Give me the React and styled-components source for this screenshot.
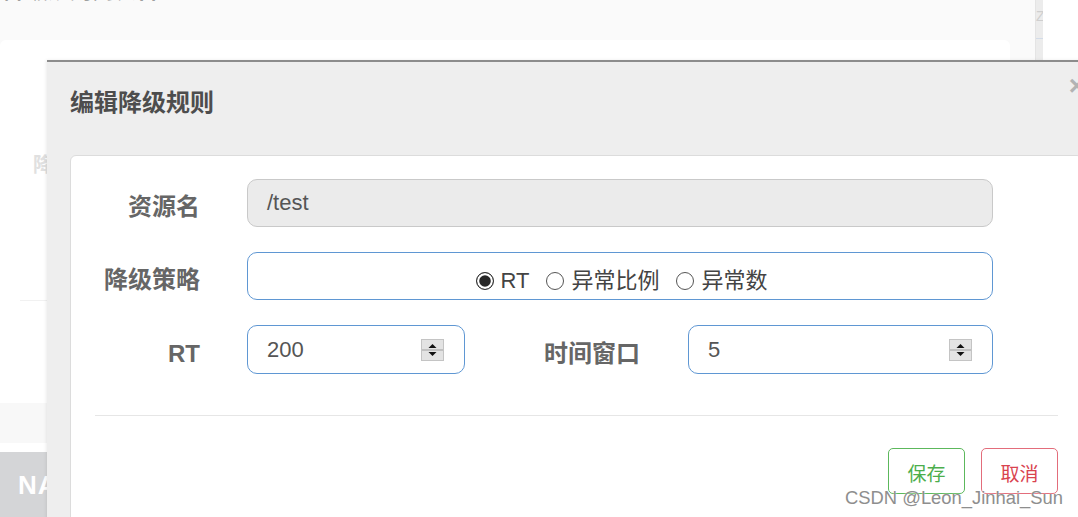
import React from "react";
import styled, { createGlobalStyle } from "styled-components";

const GlobalStyle = createGlobalStyle`
  html, body { margin: 0; padding: 0; background: #fff; overflow: hidden; }
  body { font-family: "Liberation Sans", "Noto Sans CJK SC", Arial, sans-serif; }
  * { box-sizing: border-box; }
`;

const Page = styled.div`
  position: relative;
  width: 1078px;
  height: 517px;
  overflow: hidden;
  display: flex;
  background: #fff;
`;

const MainArea = styled.div`
  width: 1035px;
  display: flex;
  flex-direction: column;
  background: #fafafa;
`;

const PageHeader = styled.div`
  height: 40px;
  overflow: hidden;
  padding-left: 4px;
`;

const PageTitle = styled.h2`
  margin: -21px 0 0;
  font-size: 22px;
  line-height: 24px;
  color: #8a8a8a;
  font-weight: 700;
`;

const Card = styled.section`
  height: 363px;
  margin-right: 25px;
  background: #fff;
  border-radius: 6px 6px 0 0;
  padding: 115px 0 0 33px;
`;

const CardLabel = styled.div`
  font-size: 20px;
  line-height: 20px;
  font-weight: 700;
  color: #e0e0e0;
`;

const CardRule = styled.div`
  margin: 125px 0 0 -13px;
  border-top: 1px solid #f1f1f1;
`;

const Strip = styled.div`
  height: 40px;
  background: #f8f8f8;
`;

const Gap = styled.div`
  height: 9px;
  background: #fff;
`;

const Footer = styled.footer`
  flex: 1;
  background: #d4d5d7;
  padding: 18px 0 0 18px;
  font-size: 26px;
  font-weight: 700;
  color: #fff;
  letter-spacing: 1px;
`;

const SideStrip = styled.div`
  width: 8px;
  height: 60px;
  background: #ececec;
  border-left: 1px solid #e4e4e4;
  overflow: hidden;
  font-size: 14px;
  color: #cfcfcf;
  padding-top: 8px;
`;

const SideLine = styled.div`
  margin-top: 14px;
  border-top: 1px solid #d3dce8;
`;

const Modal = styled.div`
  position: absolute;
  left: 47px;
  top: 60px;
  width: 1060px;
  height: 480px;
  background: #eeeeee;
  border-top: 2px solid #8c8c8c;
  box-shadow: -1px 0 3px rgba(0, 0, 0, 0.08);
`;

const ModalHeader = styled.header`
  display: flex;
  justify-content: space-between;
  align-items: flex-start;
  height: 93px;
  padding: 29px 22px 0 23px;
`;

const ModalTitle = styled.h3`
  margin: 0;
  font-size: 24px;
  line-height: 24px;
  font-weight: 700;
  color: #4d4d4d;
`;

const Close = styled.span`
  margin-top: -14px;
  font-size: 28px;
  line-height: 18px;
  font-weight: 700;
  color: #b3b3b3;
`;

const Panel = styled.div`
  margin-left: 23px;
  width: 1013px;
  background: #fff;
  border: 1px solid #dcdcdc;
  border-radius: 6px;
  padding: 23px 24px 30px;
`;

const Form = styled.div`
  display: grid;
  grid-template-columns: 105px 746px;
  column-gap: 47px;
  row-gap: 25px;
  align-items: center;
`;

const Label = styled.div`
  text-align: right;
  font-size: 24px;
  line-height: 24px;
  font-weight: 700;
  color: #666;
  padding-top: 8px;
  ${(p) => (p.$width ? `width: ${p.$width}px; flex: none;` : "")}
`;

const InputBox = styled.div`
  display: flex;
  align-items: center;
  height: ${(p) => p.$height || 48}px;
  ${(p) => (p.$width ? `width: ${p.$width}px; flex: none;` : "flex: 1;")}
  border-radius: 10px;
  padding-left: 19px;
  font-size: 22px;
  color: #555;
  background: ${(p) => (p.$disabled ? "#ebebeb" : "#fff")};
  border: ${(p) => (p.$disabled ? "1px solid #c9c9c9" : "1.5px solid #5f97d3")};
  justify-content: ${(p) => (p.$center ? "center" : "flex-start")};
  padding-top: ${(p) => (p.$center ? "10px" : "0")};
`;

const SplitRow = styled.div`
  display: flex;
  align-items: center;
`;

const LabelGap = styled.div`
  width: 48px;
  flex: none;
`;

const Spinner = styled.svg`
  margin-left: auto;
  margin-right: 20px;
  flex: none;
`;

const RadioGroup = styled.div`
  display: flex;
  align-items: center;
  gap: 17px;
  margin-left: -16px;
`;

const RadioItem = styled.label`
  display: flex;
  align-items: center;
  gap: 7px;
  font-size: 22px;
  line-height: 24px;
  color: #444;
`;

const RadioCircle = styled.span`
  width: 18px;
  height: 18px;
  border-radius: 50%;
  flex: none;
  border: ${(p) => (p.$checked ? "1.8px solid #333" : "1.4px solid #555")};
  background: ${(p) => (p.$checked ? "#262626" : "#fff")};
  box-shadow: ${(p) => (p.$checked ? "inset 0 0 0 2.2px #fff" : "none")};
`;

const Divider = styled.div`
  margin-top: 41px;
  height: 1px;
  background: #e6e6e6;
`;

const ButtonRow = styled.div`
  display: flex;
  justify-content: flex-end;
  gap: 16px;
  margin-top: 32px;
`;

const Button = styled.button`
  width: 77px;
  height: 46px;
  border-radius: 5px;
  background: #fff;
  font-family: "Noto Sans CJK SC", sans-serif;
  font-size: 19px;
  padding: 2px 0 0;
  border: 1px solid ${(p) => (p.$tone === "danger" ? "#e36d7b" : "#5cb85c")};
  color: ${(p) => (p.$tone === "danger" ? "#d9434f" : "#4cae4c")};
`;

const Watermark = styled.div`
  position: absolute;
  left: 845px;
  top: 487px;
  font-size: 18.4px;
  line-height: 22px;
  color: #8e8e8e;
  text-shadow: 0 0 2px rgba(255, 255, 255, 0.9);
  white-space: nowrap;
`;

function SpinIcon() {
  return (
    <Spinner width="23" height="22" viewBox="0 0 23 22">
      <rect x="0.5" y="0.5" width="22" height="21" fill="#e3e3e3" stroke="#c4c4c4" />
      <line x1="1" y1="11" x2="22" y2="11" stroke="#9f9f9f" />
      <polygon points="7.5,9 11.5,5 15.5,9" fill="#111" />
      <polygon points="7.5,13 15.5,13 11.5,17" fill="#111" />
    </Spinner>
  );
}

function Radio({ checked, children }) {
  return (
    <RadioItem>
      <RadioCircle $checked={checked} />
      {children}
    </RadioItem>
  );
}

export default function App() {
  return (
    <>
      <GlobalStyle />
      <Page>
        <MainArea>
          <PageHeader>
            <PageTitle>降级规则列表管理</PageTitle>
          </PageHeader>
          <Card>
            <CardLabel>降级规则</CardLabel>
            <CardRule />
          </Card>
          <Strip />
          <Gap />
          <Footer>NACOS</Footer>
        </MainArea>
        <SideStrip>
          Z
          <SideLine />
        </SideStrip>

        <Modal>
          <ModalHeader>
            <ModalTitle>编辑降级规则</ModalTitle>
            <Close>×</Close>
          </ModalHeader>
          <Panel>
            <Form>
              <Label>资源名</Label>
              <InputBox $disabled>/test</InputBox>

              <Label>降级策略</Label>
              <InputBox $center>
                <RadioGroup>
                  <Radio checked>RT</Radio>
                  <Radio>异常比例</Radio>
                  <Radio>异常数</Radio>
                </RadioGroup>
              </InputBox>

              <Label>RT</Label>
              <SplitRow>
                <InputBox $width={218} $height={49}>
                  200
                  <SpinIcon />
                </InputBox>
                <Label $width={175}>时间窗口</Label>
                <LabelGap />
                <InputBox $height={49}>
                  5
                  <SpinIcon />
                </InputBox>
              </SplitRow>
            </Form>
            <Divider />
            <ButtonRow>
              <Button>保存</Button>
              <Button $tone="danger">取消</Button>
            </ButtonRow>
          </Panel>
        </Modal>
        <Watermark>CSDN @Leon_Jinhai_Sun</Watermark>
      </Page>
    </>
  );
}
